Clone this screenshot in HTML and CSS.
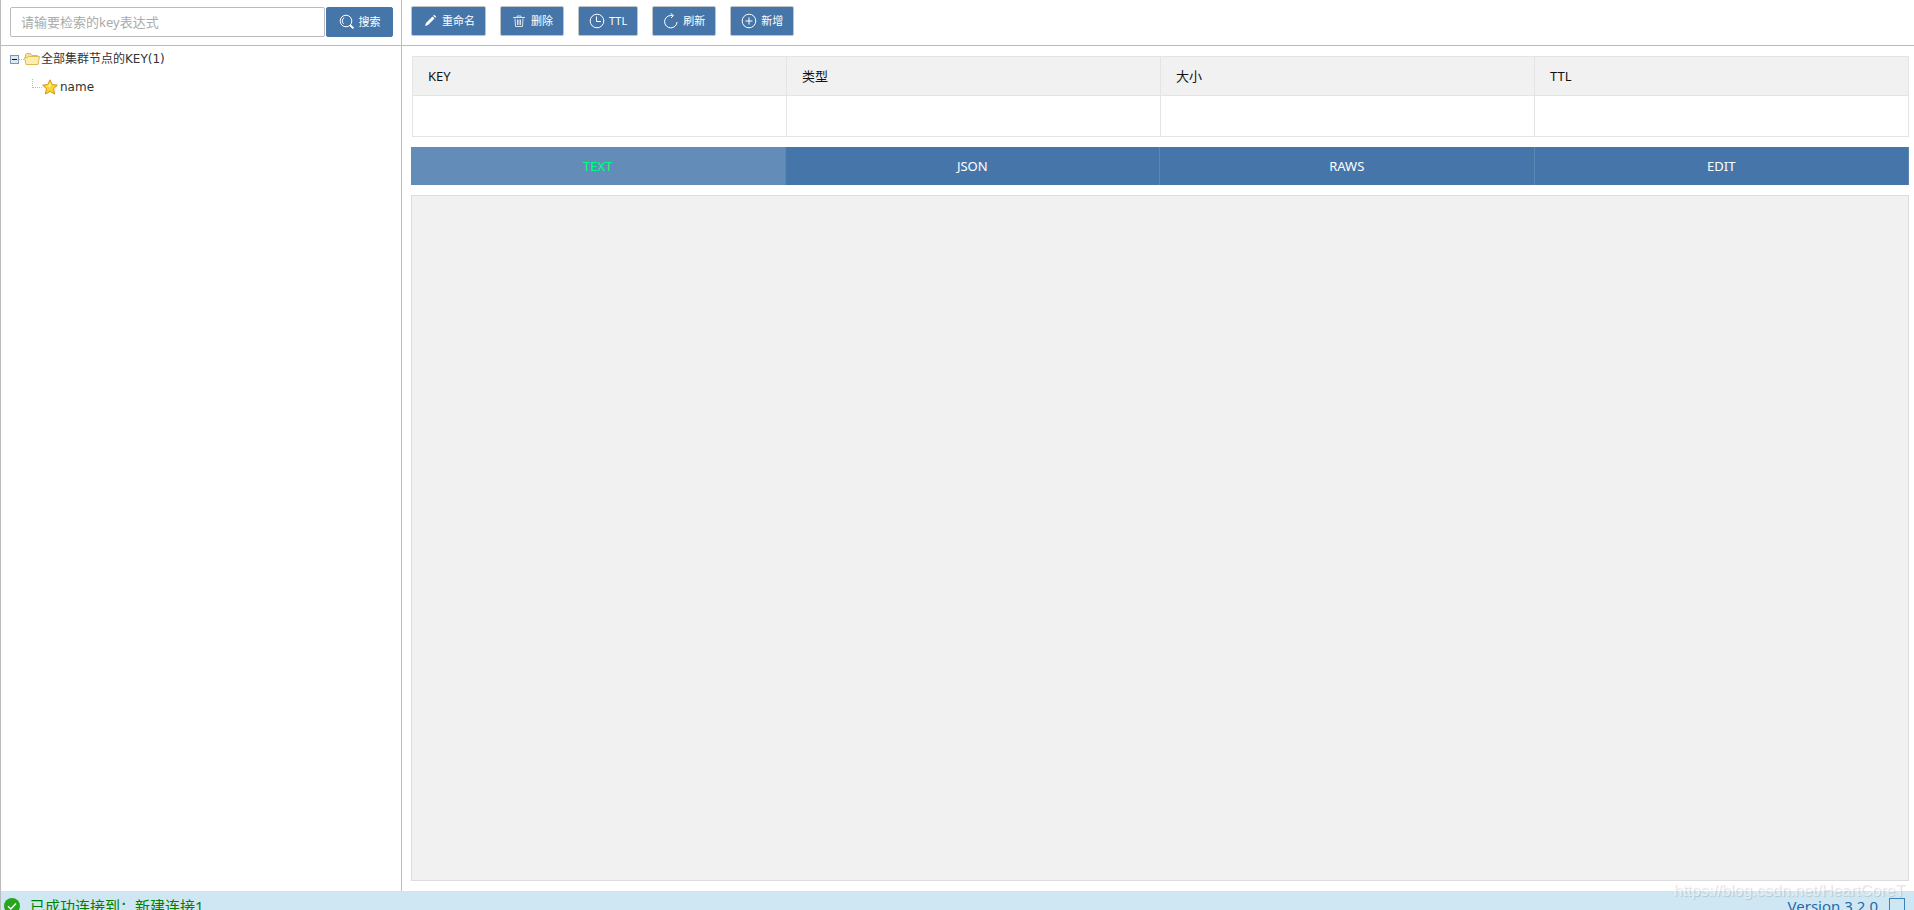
FILE: index.html
```
<!DOCTYPE html>
<html lang="zh-CN">
<head>
<meta charset="utf-8">
<title>KEY</title>
<link rel="stylesheet" href="styles.css">
</head>
<body>
<div class="workspace">
  <aside class="sidebar">
    <form class="search" onsubmit="return false">
      <input class="search-input" type="text" aria-label="key表达式" placeholder="请输要检索的key表达式">
      <button class="btn search-btn" type="submit">
        <svg class="icon" viewBox="0 0 16 16"><circle cx="7" cy="7" r="5.8"/><path d="M4.500 9.800A4 4 0 0 1 5.200 3.600"/><path d="M11.200 11.200l3.200 3.200" stroke-width="2"/></svg>
        <span>搜索</span>
      </button>
    </form>
    <ul class="tree">
      <li class="node">
        <svg class="toggle" viewBox="0 0 9 9"><rect x=".5" y=".5" width="8" height="8" fill="#dfe7ef" stroke="#7898b5"/><path d="M2 4.500h5" stroke="#111"/></svg>
        <i class="dots"></i>
        <svg class="folder" viewBox="0 0 16 16"><path d="M1.500 12V3.500l1-1h4l1.500 2h5.500V7" fill="#f6e29c" stroke="#deb955"/><path d="M.5 6.500h3l1-1H15.500l-1.500 8H2z" fill="#fcefad" stroke="#deb955"/></svg>
        <span>全部集群节点的KEY(1)</span>
      </li>
      <li class="node leaf">
        <i class="elbow"></i>
        <svg class="star" viewBox="0 0 16 16"><path d="M8 .8l2.200 4.800 5.200.6-3.900 3.500 1.100 5.300L8 12.400 3.400 15l1.100-5.300L.6 6.200l5.200-.6z" fill="#fcd62e" stroke="#d49212"/><path d="M8 3l1.300 3.300-1.500 2-3.500-1.300 2.200-.7z" fill="#ffee8a"/></svg>
        <span>name</span>
      </li>
    </ul>
  </aside>
  <main class="main">
    <div class="toolbar">
      <button class="btn tool" type="button"><svg class="icon" viewBox="0 0 16 16"><path d="M3 13l1-3 6.500-6.500 2 2L6 12z" fill="#fff" stroke="none"/><path d="M11.200 2.800l1-1 2 2-1 1z" fill="#fff" stroke="none"/></svg><span>重命名</span></button>
      <button class="btn tool" type="button"><svg class="icon" viewBox="0 0 16 16" opacity=".8"><path d="M2 4.500h12M6 4V3h4v1M4 5.500l.5 8h7l.5-8M6.500 6.500v5.500M8 6.500v5.500M9.500 6.500v5.500"/></svg><span>删除</span></button>
      <button class="btn tool" type="button"><svg class="icon" viewBox="0 0 16 16"><circle cx="8" cy="8" r="6.800"/><path d="M7.500 3.500v5h4.500"/></svg><span>TTL</span></button>
      <button class="btn tool" type="button"><svg class="icon" viewBox="0 0 16 16"><path d="M9.500 2.500H7.500A6.200 6.200 0 1 0 14 9"/><path d="M7.500.5l3 2-2.500 2.500"/></svg><span>刷新</span></button>
      <button class="btn tool" type="button"><svg class="icon" viewBox="0 0 16 16"><circle cx="8" cy="8" r="6.800"/><path d="M8 4.500v7M4.500 8h7"/></svg><span>新增</span></button>
    </div>
    <div class="content">
      <table class="info">
        <thead><tr><th>KEY</th><th>类型</th><th>大小</th><th>TTL</th></tr></thead>
        <tbody><tr><td></td><td></td><td></td><td></td></tr></tbody>
      </table>
      <nav class="tabs">
        <button class="tab active" type="button">TEXT</button>
        <button class="tab" type="button">JSON</button>
        <button class="tab" type="button">RAWS</button>
        <button class="tab" type="button">EDIT</button>
      </nav>
      <section class="viewer"></section>
    </div>
  </main>
</div>
<footer class="status">
  <svg class="ok" viewBox="0 0 16 16"><circle cx="8" cy="8" r="8" fill="#27a51b"/><path d="M4 8.300l2.800 2.700L12 5.500" fill="none" stroke="#fff" stroke-width="1.400"/></svg>
  <span class="message">已成功连接到：新建连接1</span>
  <span class="version">Version 3.2.0</span>
  <input class="box" type="checkbox" aria-label="Version 3.2.0">
</footer>
<div class="watermark">https://blog.csdn.net/HeartCoreT</div>
</body>
</html>
```
FILE: styles.css
```
* { box-sizing: border-box; }
body {
  margin: 0;
  height: 100vh;
  display: flex;
  flex-direction: column;
  overflow: hidden;
  border-left: 1px solid #bbb;
  background: #fff;
  color: #333;
  font: 12px/18px "Noto Sans", "Noto Sans CJK SC", sans-serif;
}
button, input { font: inherit; }
.workspace { flex: 1; display: flex; min-height: 0; }
.sidebar { flex: none; width: 401px; border-right: 1px solid #bbb; }
.search {
  display: flex;
  gap: 1px;
  height: 46px;
  padding: 7px 8px 8px 9px;
  border-bottom: 1px solid #bbb;
}
.search-input {
  flex: 1;
  min-width: 0;
  height: 30px;
  padding: 0 10px;
  border: 1px solid #bbb;
  border-radius: 2px;
  font-size: 13px;
}
.search-input::placeholder { color: #aaa; }
.btn {
  display: flex;
  align-items: center;
  justify-content: center;
  gap: 4px;
  height: 30px;
  padding: 0 10px;
  border: 1px solid #bdc3c7;
  border-radius: 2px;
  background: #4676a9;
  color: #fff;
  font-size: 11px;
}
.btn span { white-space: nowrap; }
.search-btn { width: 67px; border-color: #4676a9; }
.icon { flex: none; width: 16px; height: 16px; fill: none; stroke: #fff; stroke-width: 1; }
.tree { margin: 0; padding: 4px 9px; list-style: none; }
.node { display: flex; align-items: center; height: 18px; }
.leaf { margin-top: 10px; padding-left: 22px; }
.toggle { width: 9px; height: 9px; }
.dots { width: 5px; border-top: 1px dotted #bbb; }
.folder { width: 16px; height: 16px; margin-right: 1px; }
.elbow { width: 10px; height: 9px; margin-bottom: 8px; border-left: 1px dotted #bbb; border-bottom: 1px dotted #bbb; }
.star { width: 16px; height: 16px; margin-right: 2px; }
.node span { font-family: "DejaVu Sans", "Noto Sans CJK SC", sans-serif; }
.main { flex: 1; display: flex; flex-direction: column; min-width: 0; }
.toolbar { display: flex; gap: 14px; height: 46px; padding: 6px 9px; border-bottom: 1px solid #bbb; }
.content { flex: 1; display: flex; flex-direction: column; gap: 10px; padding: 10px 5px 10px 9px; }
.info { margin-left: 1px; table-layout: fixed; border-collapse: collapse; }
.info th, .info td { width: 25%; border: 1px solid #e4e4e4; padding: 0 15px; text-align: left; font-weight: 400; }
.info th { height: 39px; padding-bottom: 1px; background: #f1f1f1; color: #111; font-size: 13px; }
.info td { height: 41px; }
.tabs { display: flex; height: 38px; }
.tab {
  flex: 1;
  padding: 0;
  border: 0;
  border-right: 1px solid #5b87b5;
  background: #4676a9;
  color: #fff;
  font-size: 13px;
}
.tab.active { background: #638db8; color: #00ff7f; }
.viewer { flex: 1; border: 1px solid #ddd; background: #f1f1f1; }
.status {
  display: flex;
  align-items: flex-start;
  height: 19px;
  padding: 7px 9px 0 3px;
  overflow: hidden;
  background: #cfe7f3;
  color: #008000;
  font-size: 15px;
  line-height: 16px;
}
.ok { flex: none; width: 16px; height: 16px; margin-right: 10px; }
.version { margin-left: auto; margin-right: 11px; color: #1e69a8; }
.box { appearance: none; width: 16px; height: 16px; margin: 0; border: 1px solid #3c82bd; }
.watermark {
  position: absolute;
  right: 9px;
  bottom: 9px;
  color: rgba(255, 255, 255, .6);
  font: 16px/20px "Liberation Sans", sans-serif;
  text-shadow: 1px 1px 1px rgba(0, 0, 0, .15);
}
```
